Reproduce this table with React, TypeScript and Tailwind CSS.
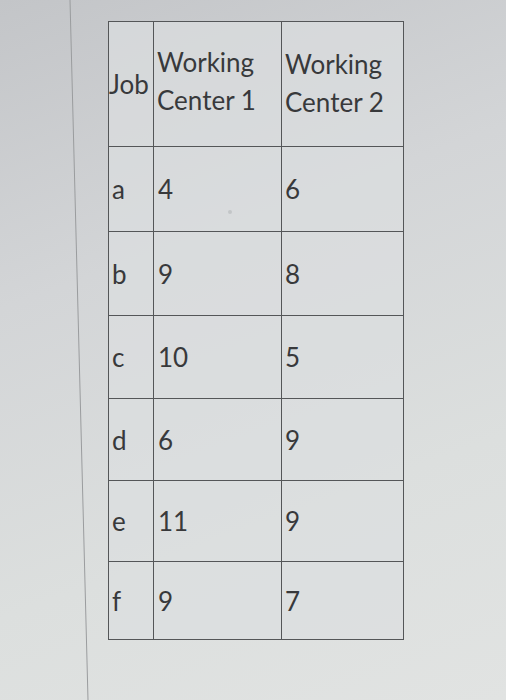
const rows = [
  { job: "a", w1: "4", w2: "6", h: "h-[85px]" },
  { job: "b", w1: "9", w2: "8", h: "h-[84px]" },
  { job: "c", w1: "10", w2: "5", h: "h-[83px]" },
  { job: "d", w1: "6", w2: "9", h: "h-[82px]" },
  { job: "e", w1: "11", w2: "9", h: "h-[81px]" },
  { job: "f", w1: "9", w2: "7", h: "h-[78px]" },
];

export default function App() {
  return (
    <div
      className="relative h-[700px] w-[506px] overflow-hidden bg-[linear-gradient(160deg,#c3c5c8_0%,#d3d5d7_35%,#dcdfde_70%,#e1e3e2_100%)] text-[#38393b]"
      style={{ fontFamily: "Lato, 'Open Sans', sans-serif" }}
    >
      {/* faint page margin line */}
      <svg className="absolute inset-0" width="506" height="700" aria-hidden>
        <line x1="70" y1="0" x2="88" y2="700" stroke="#9a9c9e" strokeWidth="1" />
        <circle cx="230" cy="212" r="2" fill="#8a8c8e" />
      </svg>

      <div className="relative pl-[108px] pt-[21px]">
        <table className="w-[295px] table-fixed border-collapse bg-[#dcdedf]/70 text-[26px] leading-[38px]">
          <colgroup>
            <col className="w-[45px]" />
            <col className="w-[128px]" />
            <col className="w-[122px]" />
          </colgroup>
          <thead>
            <tr className="h-[125px]">
              <th className="border-[1.5px] border-[#545658] pl-0 text-left align-middle font-normal">
                Job
              </th>
              <th className="border-[1.5px] border-[#545658] pb-[6px] pl-[3px] text-left align-middle font-normal">
                Working
                <br />
                Center 1
              </th>
              <th className="border-[1.5px] border-[#545658] pb-[2px] pl-[3px] text-left align-middle font-normal">
                Working
                <br />
                Center 2
              </th>
            </tr>
          </thead>
          <tbody>
            {rows.map((r) => (
              <tr key={r.job} className={r.h}>
                <td className="border-[1.5px] border-[#545658] pl-[3px] align-middle">{r.job}</td>
                <td className="border-[1.5px] border-[#545658] pl-[4px] align-middle">{r.w1}</td>
                <td className="border-[1.5px] border-[#545658] pl-[3px] align-middle">{r.w2}</td>
              </tr>
            ))}
          </tbody>
        </table>
      </div>
    </div>
  );
}
